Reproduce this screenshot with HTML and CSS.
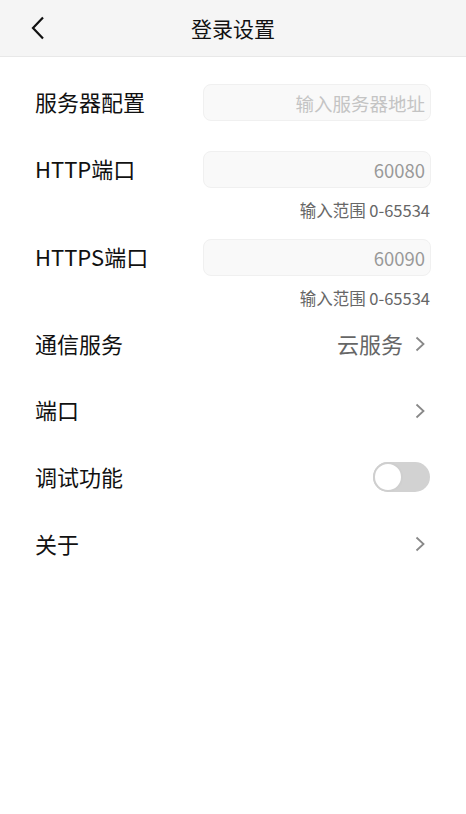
FILE: index.html
```html
<!DOCTYPE html>
<html lang="zh-CN">
<head>
  <meta charset="UTF-8">
  <meta name="viewport" content="width=device-width, initial-scale=1">
  <title>登录设置</title>
  <link rel="stylesheet" href="styles.css">
</head>
<body>

  <!-- Header -->
  <div class="header">
    <span class="back">
      <svg width="14" height="24" viewBox="0 0 14 24"><polyline points="12,1.5 2,12 12,22.5" fill="none" stroke="#111" stroke-width="2.2"/></svg>
    </span>
    <h1 class="title">登录设置</h1>
  </div>

  <div class="content">
    <!-- Server fields -->
    <div class="field">
      <label>服务器配置</label>
      <input type="text" placeholder="输入服务器地址">
    </div>

    <div class="field">
      <label>HTTP端口</label>
      <input type="text" value="60080">
    </div>
    <p class="hint">输入范围 0-65534</p>

    <div class="field">
      <label>HTTPS端口</label>
      <input type="text" value="60090">
    </div>
    <p class="hint last">输入范围 0-65534</p>

    <!-- Options -->
    <ul class="options">
      <li>
        <span>通信服务</span>
        <span class="right"><span class="value">云服务</span><svg class="arrow" width="10" height="16" viewBox="0 0 10 16"><polyline points="1.5,1.5 8.5,8 1.5,14.5" fill="none" stroke="#888" stroke-width="1.8"/></svg></span>
      </li>
      <li>
        <span>端口</span>
        <span class="right"><svg class="arrow" width="10" height="16" viewBox="0 0 10 16"><polyline points="1.5,1.5 8.5,8 1.5,14.5" fill="none" stroke="#888" stroke-width="1.8"/></svg></span>
      </li>
      <li>
        <span>调试功能</span>
        <span class="toggle"><span class="knob"></span></span>
      </li>
      <li>
        <span>关于</span>
        <span class="right"><svg class="arrow" width="10" height="16" viewBox="0 0 10 16"><polyline points="1.5,1.5 8.5,8 1.5,14.5" fill="none" stroke="#888" stroke-width="1.8"/></svg></span>
      </li>
    </ul>
  </div>

</body>
</html>
```

FILE: styles.css
```css
body {
  margin: 0;
  background: #fff;
  font-family: "Noto Sans CJK SC", "Noto Sans", sans-serif;
  color: #111;
}

.header {
  height: 56px;
  background: #f5f5f5;
  border-bottom: 1px solid #e8e8e8;
  display: flex;
  align-items: center;
  justify-content: center;
  position: relative;
}

.back {
  position: absolute;
  left: 31px;
  top: 16px;
}

.title {
  margin: 0;
  font-size: 21px;
  font-weight: normal;
}

.content {
  padding: 27px 36px 0 35px;
}

.field {
  display: flex;
  align-items: center;
  justify-content: space-between;
  height: 37px;
  margin-bottom: 30px;
}

.field label {
  font-size: 22px;
  line-height: 30px;
  padding-bottom: 3px;
}

.field input {
  width: 228px;
  height: 37px;
  box-sizing: border-box;
  margin-right: -1px;
  border: 1px solid #f0f0f0;
  border-radius: 8px;
  background: #f9f9f9;
  padding: 0 5px 0 8px;
  text-align: right;
  font-family: "Noto Sans CJK SC", sans-serif;
  font-size: 18.5px;
  color: #999;
  outline: none;
}

.field input::placeholder {
  color: #c4c4c4;
}

.field + .hint {
  margin-top: -19px;
}

.hint {
  margin: 0 0 18px;
  text-align: right;
  font-size: 16.5px;
  line-height: 22px;
  color: #666;
}

.hint.last {
  margin-bottom: 0;
}

.options {
  list-style: none;
  margin: 2px 0 0;
  padding: 0;
}

.options li {
  height: 66.6px;
  display: flex;
  align-items: center;
  justify-content: space-between;
  font-size: 22px;
}

.options li > span:first-child {
  padding-bottom: 3px;
}

.right {
  display: flex;
  align-items: center;
}

.value {
  color: #666;
  font-size: 22px;
  margin-right: 12px;
  padding-bottom: 3px;
}

.arrow {
  margin-right: 5px;
}

.toggle {
  width: 57px;
  height: 30px;
  border-radius: 15px;
  background: #d2d2d2;
  position: relative;
}

.knob {
  position: absolute;
  left: 0;
  top: 0;
  width: 30px;
  height: 30px;
  box-sizing: border-box;
  border-radius: 50%;
  background: #fff;
  border: 2px solid #cfcfcf;
}
```
